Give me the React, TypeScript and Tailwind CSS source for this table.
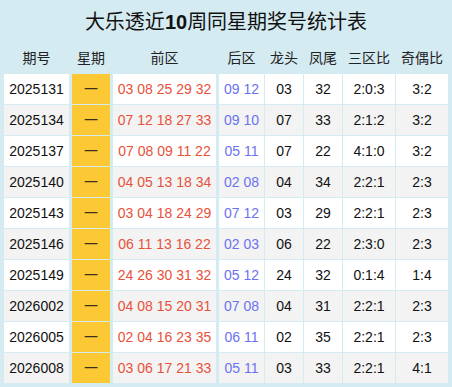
import React from "react";

type Row = {
  issue: string;
  front: string;
  back: string;
  head: string;
  tail: string;
  zone: string;
  odd: string;
};

const rows: Row[] = [
  { issue: "2025131", front: "03 08 25 29 32", back: "09 12", head: "03", tail: "32", zone: "2:0:3", odd: "3:2" },
  { issue: "2025134", front: "07 12 18 27 33", back: "09 10", head: "07", tail: "33", zone: "2:1:2", odd: "3:2" },
  { issue: "2025137", front: "07 08 09 11 22", back: "05 11", head: "07", tail: "22", zone: "4:1:0", odd: "3:2" },
  { issue: "2025140", front: "04 05 13 18 34", back: "02 08", head: "04", tail: "34", zone: "2:2:1", odd: "2:3" },
  { issue: "2025143", front: "03 04 18 24 29", back: "07 12", head: "03", tail: "29", zone: "2:2:1", odd: "2:3" },
  { issue: "2025146", front: "06 11 13 16 22", back: "02 03", head: "06", tail: "22", zone: "2:3:0", odd: "2:3" },
  { issue: "2025149", front: "24 26 30 31 32", back: "05 12", head: "24", tail: "32", zone: "0:1:4", odd: "1:4" },
  { issue: "2026002", front: "04 08 15 20 31", back: "07 08", head: "04", tail: "31", zone: "2:2:1", odd: "2:3" },
  { issue: "2026005", front: "02 04 16 23 35", back: "06 11", head: "02", tail: "35", zone: "2:2:1", odd: "2:3" },
  { issue: "2026008", front: "03 06 17 21 33", back: "05 11", head: "03", tail: "33", zone: "2:2:1", odd: "4:1" },
];

const headers = ["期号", "星期", "前区", "后区", "龙头", "凤尾", "三区比", "奇偶比"];

const App: React.FC = () => {
  return (
    <div
      className="w-[452px] h-[387px] bg-[#d5ebf2] px-[4px] text-[#111]"
      style={{ fontFamily: '"Liberation Sans", "Noto Sans CJK SC", sans-serif' }}
    >
      <div className="h-[42px] flex items-center justify-center text-[20px] pt-[2px]">
        大乐透近<span className="font-bold">10</span>周同星期奖号统计表
      </div>
      <div className="grid grid-cols-[65px_40px_105px_47px_38px_38px_52px_52px] gap-x-px h-[32px] items-center text-[14px] text-[#222]">
        {headers.map((h, i) => (
          <div key={h} className={`text-center ${i === 1 || i === 2 || i === 3 ? "ml-[2px]" : ""}`}>
            {h}
          </div>
        ))}
      </div>
      <div className="flex flex-col gap-y-px">
        {rows.map((r, idx) => {
          const bg = idx % 2 === 0 ? "bg-white" : "bg-[#f3f3f3]";
          return (
            <div
              key={r.issue}
              className="grid grid-cols-[65px_40px_105px_47px_38px_38px_52px_52px] gap-x-px h-[30px] text-[14px]"
            >
              <div className={`${bg} flex items-center justify-center`}>{r.issue}</div>
              <div className="ml-[2px] bg-[#fcc934] flex items-center justify-center text-[#3a3020]">一</div>
              <div className={`ml-[2px] ${bg} flex items-center justify-center text-[#e8513a]`}>{r.front}</div>
              <div className={`ml-[2px] ${bg} flex items-center justify-center text-[#6b72ef]`}>{r.back}</div>
              <div className={`${bg} flex items-center justify-center`}>{r.head}</div>
              <div className={`${bg} flex items-center justify-center`}>{r.tail}</div>
              <div className={`${bg} flex items-center justify-center`}>{r.zone}</div>
              <div className={`${bg} flex items-center justify-center`}>{r.odd}</div>
            </div>
          );
        })}
      </div>
    </div>
  );
};

export default App;
